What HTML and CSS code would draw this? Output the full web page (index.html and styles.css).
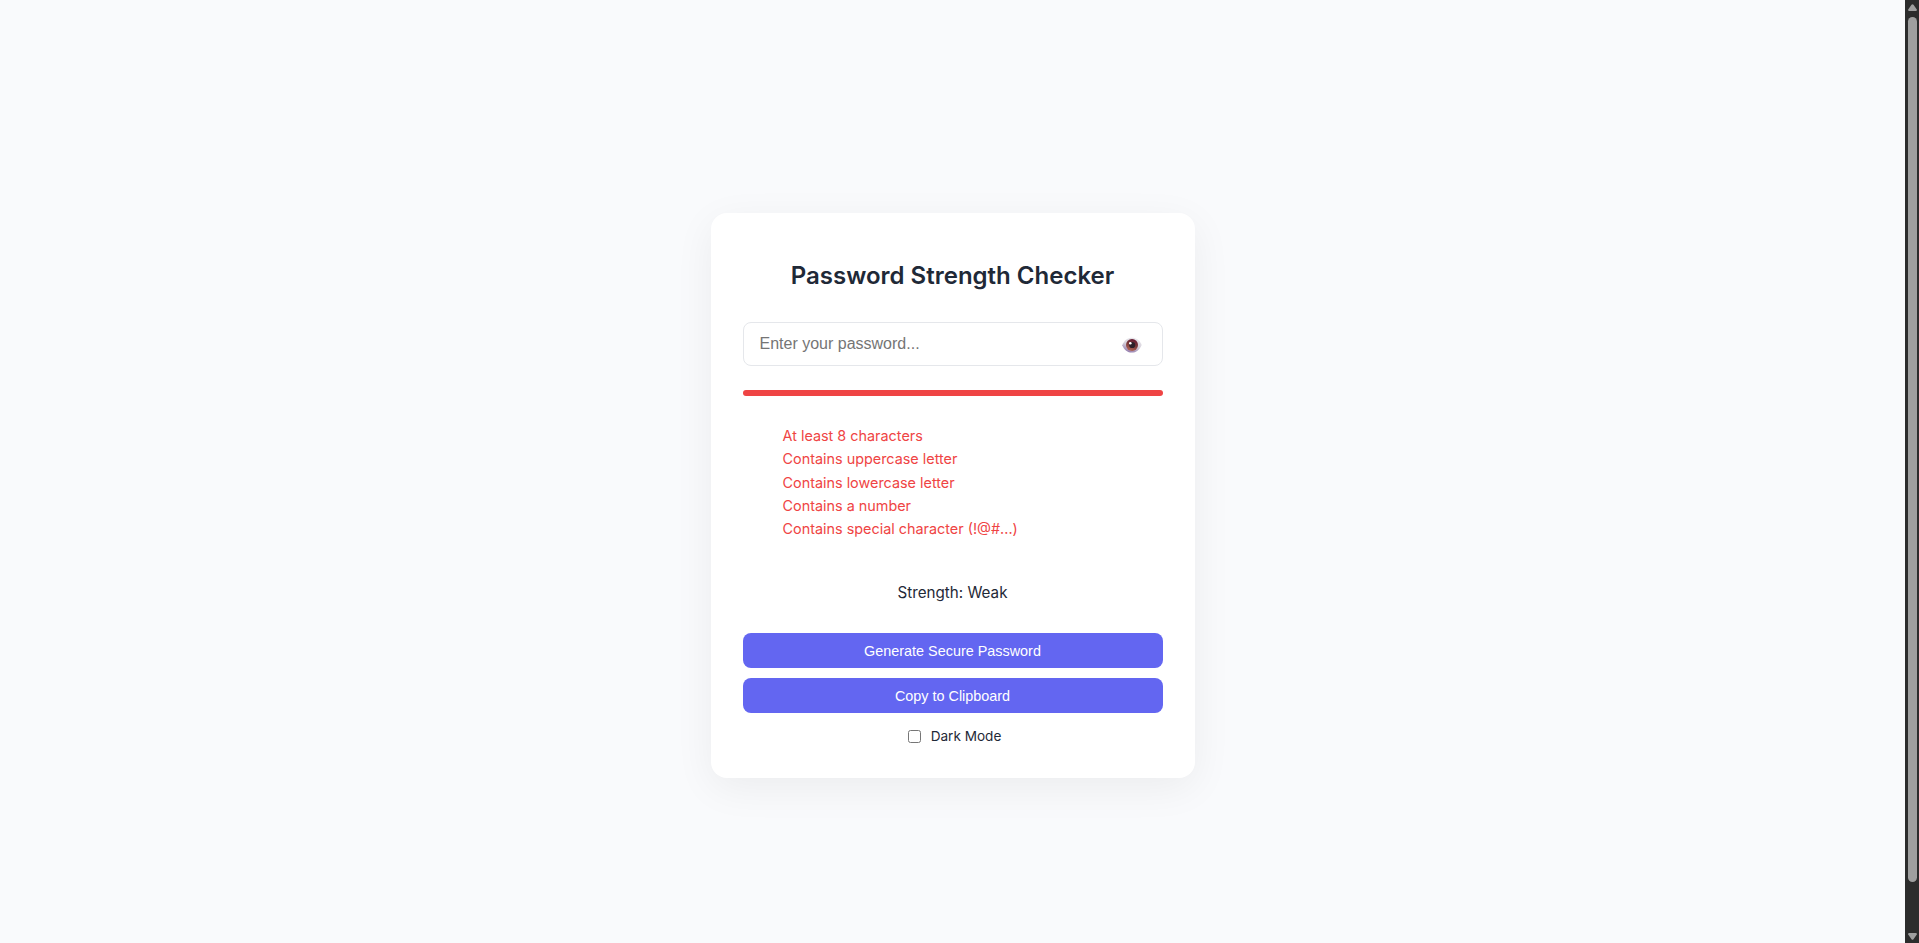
FILE: index.html
```html
<!DOCTYPE html>
<html lang="en">
<head>
<meta charset="UTF-8">
<title>Password Strength Checker</title>
<link rel="stylesheet" href="styles.css">
</head>
<body>
<main class="page">
  <section class="card">
    <h2 class="title">Password Strength Checker</h2>
    <div class="field">
      <input class="password" type="password" placeholder="Enter your password...">
      <svg class="eye" viewBox="0 0 20 16" aria-label="Show password">
        <defs>
          <linearGradient id="white" x1="0.7" y1="0" x2="0.3" y2="1">
            <stop offset="0" stop-color="#eceaee"/><stop offset="0.5" stop-color="#d6d1db"/><stop offset="1" stop-color="#8f76aa"/>
          </linearGradient>
          <linearGradient id="iris" x1="0.7" y1="0" x2="0.3" y2="1">
            <stop offset="0" stop-color="#621832"/><stop offset="0.5" stop-color="#7c3b3b"/><stop offset="1" stop-color="#b5695a"/>
          </linearGradient>
        </defs>
        <path d="M0.2 8.2C2.2 3 6 0.7 10 0.7s7.700 2.500 9.700 7.200C17.600 12.800 14 15.600 9.800 15.600S2.300 13 .2 8.200z" fill="url(#white)"/>
        <circle cx="10" cy="8" r="6" fill="url(#iris)"/>
        <circle cx="10.200" cy="8" r="3.100" fill="#2c2029"/>
        <circle cx="8.300" cy="6.300" r="1.300" fill="#fff"/>
      </svg>
    </div>
    <div class="meter"></div>
    <ul class="rules">
      <li>At least 8 characters</li>
      <li>Contains uppercase letter</li>
      <li>Contains lowercase letter</li>
      <li>Contains a number</li>
      <li>Contains special character (!@#...)</li>
    </ul>
    <p class="strength">Strength: Weak</p>
    <div class="actions">
      <button class="button">Generate Secure Password</button>
      <button class="button">Copy to Clipboard</button>
    </div>
    <label class="mode"><input class="check" type="checkbox"><span>Dark Mode</span></label>
  </section>
</main>
<aside class="scrollbar">
  <svg class="arrow" viewBox="0 0 9 7"><path d="M3.500.8q1-1.300 2 0L8.800 5.500q.4 1.500-1 1.500H1.200Q-.2 7 .2 5.500z"/></svg>
  <div class="thumb"></div>
  <svg class="arrow arrow-down" viewBox="0 0 9 7"><path d="M3.500.8q1-1.300 2 0L8.800 5.500q.4 1.500-1 1.500H1.200Q-.2 7 .2 5.500z"/></svg>
</aside>
</body>
</html>
```
FILE: styles.css
```css
* { box-sizing: border-box; }
body {
  margin: 0;
  height: 943px;
  display: flex;
  overflow: hidden;
  background: #f9fafc;
  color: #1f2937;
  font-family: Inter, "Liberation Sans", sans-serif;
}
.page {
  flex: 1;
  padding-top: 213px;
  display: flex;
  justify-content: center;
  align-items: flex-start;
}
.card {
  width: 484px;
  height: 565px;
  padding: 48px 32px 0;
  border-radius: 16px;
  background: #fff;
  box-shadow: 0 10px 40px rgba(0, 0, 0, 0.06);
}
.title {
  margin: 0 0 32px;
  font-size: 24px;
  font-weight: 600;
  line-height: 29px;
  text-align: center;
}
.field {
  display: flex;
  align-items: center;
  height: 44px;
  padding: 0 20px 0 16px;
  border: 1px solid #e5e7eb;
  border-radius: 8px;
}
.password {
  flex: 1;
  padding: 0;
  border: 0;
  outline: 0;
  background: none;
  font: 16px "Liberation Sans", sans-serif;
}
.password::placeholder { color: #757575; }
.eye { width: 20px; height: 16px; margin-top: 1px; }
.meter {
  height: 6px;
  margin-top: 24px;
  border-radius: 3px;
  background: #ef4444;
}
.rules {
  margin: 28px 0 0;
  padding: 0 0 0 40px;
  list-style: none;
  color: #ef4444;
  font-size: 14.4px;
  line-height: 23.300px;
}
.strength {
  margin: 42.500px 0 0;
  font-size: 15.200px;
  line-height: 20px;
  text-align: center;
}
.actions {
  display: grid;
  gap: 10px;
  margin-top: 30px;
}
.button {
  height: 35px;
  padding: 1px 0 0;
  border: 0;
  border-radius: 8px;
  background: #6366f1;
  color: #fff;
  font: 14.4px "Liberation Sans", sans-serif;
}
.mode {
  display: flex;
  justify-content: center;
  align-items: center;
  gap: 10px;
  margin-top: 14.500px;
  padding-left: 4px;
  font-size: 13.600px;
  line-height: 18px;
}
.check { width: 13px; height: 13px; margin: 0; }
.scrollbar {
  width: 14px;
  padding: 4px 2px 3px 3px;
  display: flex;
  flex-direction: column;
  background: #2c2c2c;
}
.arrow { width: 9px; height: 7px; fill: #9f9f9f; }
.thumb {
  height: 865px;
  margin-top: 6px;
  border-radius: 5px;
  background: #9f9f9f;
}
.arrow-down { margin-top: auto; transform: rotate(180deg); }
```
